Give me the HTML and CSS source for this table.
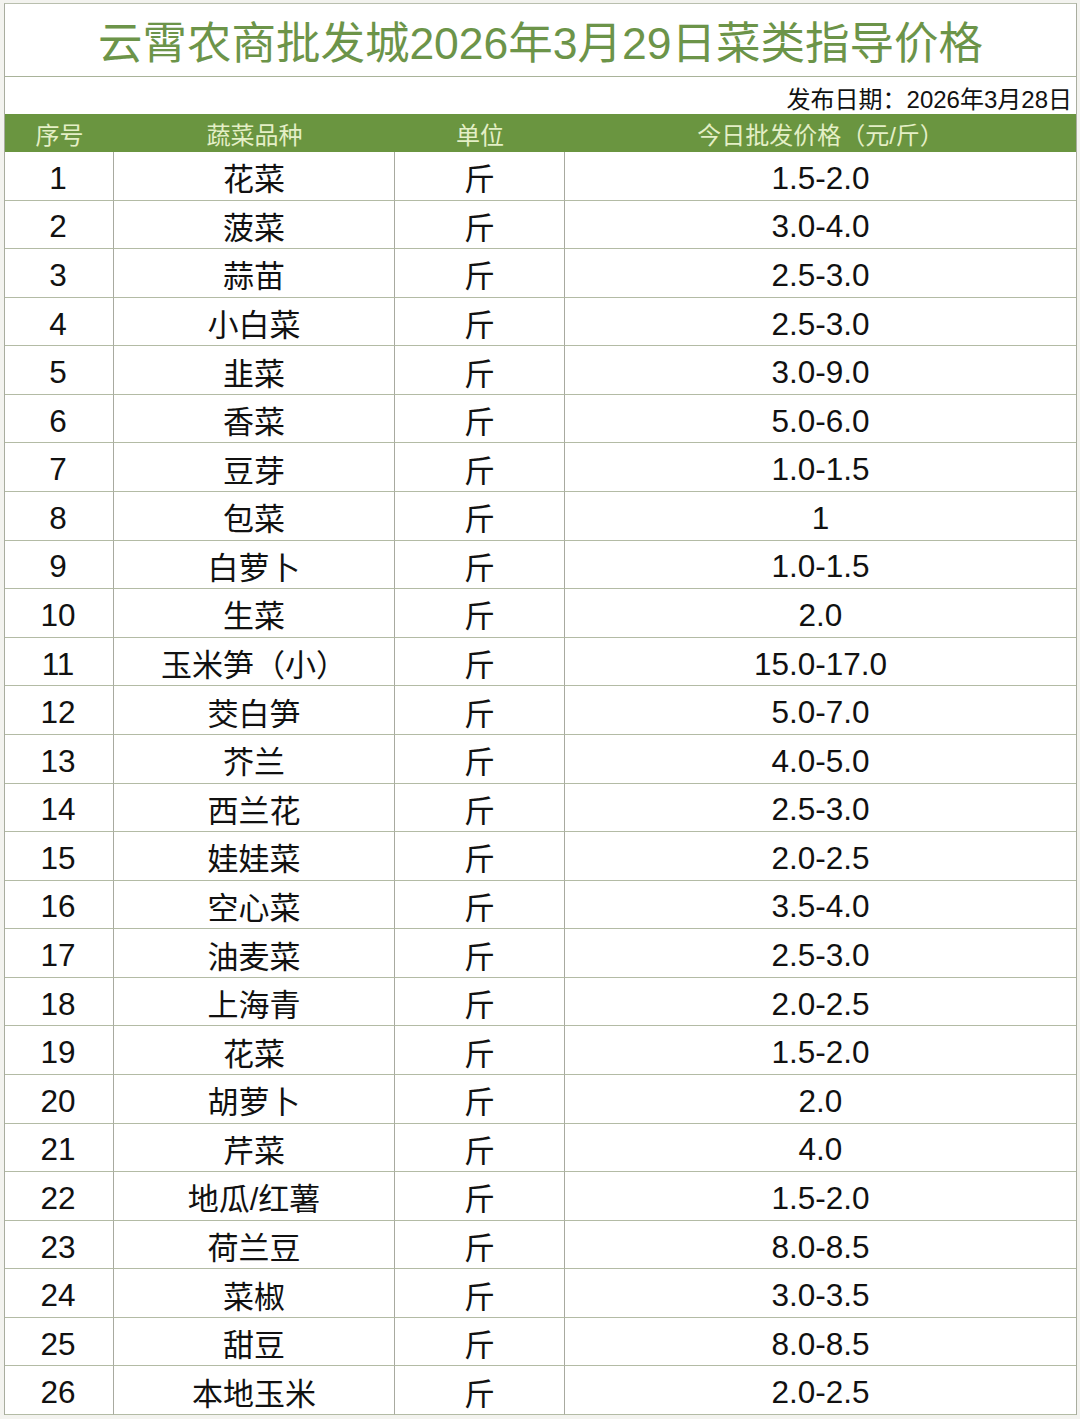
FILE: index.html
```html
<!DOCTYPE html>
<html lang="zh-CN">
<head>
<meta charset="utf-8">
<title>云霄农商批发城2026年3月29日菜类指导价格</title>
<link rel="stylesheet" href="styles.css">
</head>
<body>
<div class="sheet">
  <div class="title">云霄农商批发城2026年3月29日菜类指导价格</div>
  <div class="date">发布日期：2026年3月28日</div>
  <div class="head">
    <div>序号</div><div>蔬菜品种</div><div>单位</div><div>今日批发价格（元/斤）</div>
  </div>
  <div class="grid">
    <div class="c">1</div><div class="c">花菜</div><div class="c">斤</div><div class="c">1.5-2.0</div>
    <div class="c">2</div><div class="c">菠菜</div><div class="c">斤</div><div class="c">3.0-4.0</div>
    <div class="c">3</div><div class="c">蒜苗</div><div class="c">斤</div><div class="c">2.5-3.0</div>
    <div class="c">4</div><div class="c">小白菜</div><div class="c">斤</div><div class="c">2.5-3.0</div>
    <div class="c">5</div><div class="c">韭菜</div><div class="c">斤</div><div class="c">3.0-9.0</div>
    <div class="c">6</div><div class="c">香菜</div><div class="c">斤</div><div class="c">5.0-6.0</div>
    <div class="c">7</div><div class="c">豆芽</div><div class="c">斤</div><div class="c">1.0-1.5</div>
    <div class="c">8</div><div class="c">包菜</div><div class="c">斤</div><div class="c">1</div>
    <div class="c">9</div><div class="c">白萝卜</div><div class="c">斤</div><div class="c">1.0-1.5</div>
    <div class="c">10</div><div class="c">生菜</div><div class="c">斤</div><div class="c">2.0</div>
    <div class="c">11</div><div class="c">玉米笋（小）</div><div class="c">斤</div><div class="c">15.0-17.0</div>
    <div class="c">12</div><div class="c">茭白笋</div><div class="c">斤</div><div class="c">5.0-7.0</div>
    <div class="c">13</div><div class="c">芥兰</div><div class="c">斤</div><div class="c">4.0-5.0</div>
    <div class="c">14</div><div class="c">西兰花</div><div class="c">斤</div><div class="c">2.5-3.0</div>
    <div class="c">15</div><div class="c">娃娃菜</div><div class="c">斤</div><div class="c">2.0-2.5</div>
    <div class="c">16</div><div class="c">空心菜</div><div class="c">斤</div><div class="c">3.5-4.0</div>
    <div class="c">17</div><div class="c">油麦菜</div><div class="c">斤</div><div class="c">2.5-3.0</div>
    <div class="c">18</div><div class="c">上海青</div><div class="c">斤</div><div class="c">2.0-2.5</div>
    <div class="c">19</div><div class="c">花菜</div><div class="c">斤</div><div class="c">1.5-2.0</div>
    <div class="c">20</div><div class="c">胡萝卜</div><div class="c">斤</div><div class="c">2.0</div>
    <div class="c">21</div><div class="c">芹菜</div><div class="c">斤</div><div class="c">4.0</div>
    <div class="c">22</div><div class="c">地瓜/红薯</div><div class="c">斤</div><div class="c">1.5-2.0</div>
    <div class="c">23</div><div class="c">荷兰豆</div><div class="c">斤</div><div class="c">8.0-8.5</div>
    <div class="c">24</div><div class="c">菜椒</div><div class="c">斤</div><div class="c">3.0-3.5</div>
    <div class="c">25</div><div class="c">甜豆</div><div class="c">斤</div><div class="c">8.0-8.5</div>
    <div class="c">26</div><div class="c">本地玉米</div><div class="c">斤</div><div class="c">2.0-2.5</div>
  </div>
</div>
</body>
</html>
```

FILE: styles.css
```css
html, body {
  margin: 0;
  padding: 0;
  background: #f3f3ef;
}
body {
  font-family: "Liberation Sans", "Noto Sans CJK SC", sans-serif;
  color: #111;
}
.sheet {
  margin: 3px 0 0 4px;
  width: 1073px;
  box-sizing: border-box;
  background: #fff;
  border-top: 1px solid #b9bfae;
  border-left: 1px solid #a9ad9f;
  border-right: 1px solid #a9ad9f;
}
.title {
  height: 73px;
  border-bottom: 1px solid #a9b39a;
  display: flex;
  align-items: center;
  justify-content: center;
  font-size: 44.5px;
  color: #6c9449;
  padding-bottom: 2px;
  box-sizing: border-box;
}
.date {
  height: 37px;
  display: flex;
  align-items: center;
  justify-content: flex-end;
  padding-right: 4px;
  font-size: 24px;
  color: #111;
  padding-top: 4px;
  box-sizing: border-box;
}
.head {
  height: 38px;
  display: grid;
  grid-template-columns: 109px 281px 170px 1fr;
  background: #6a9540;
  color: #e4efc6;
  font-size: 24px;
}
.head > div {
  display: flex;
  align-items: center;
  justify-content: center;
}
.grid {
  display: grid;
  grid-template-columns: 109px 281px 170px 1fr;
  grid-auto-rows: 48.58px;
}
.c {
  box-sizing: border-box;
  border-bottom: 1px solid #b3bba5;
  border-right: 1px solid #a8aaa0;
  display: flex;
  align-items: center;
  justify-content: center;
  font-size: 31px;
  padding-top: 2px;
}
.c:nth-child(4n+1),
.c:nth-child(4n) {
  padding-top: 5px;
  font-size: 31.5px;
}
.c:nth-child(4n+1) {
  padding-right: 2px;
}
.c:nth-child(4n) {
  border-right: none;
}
```
